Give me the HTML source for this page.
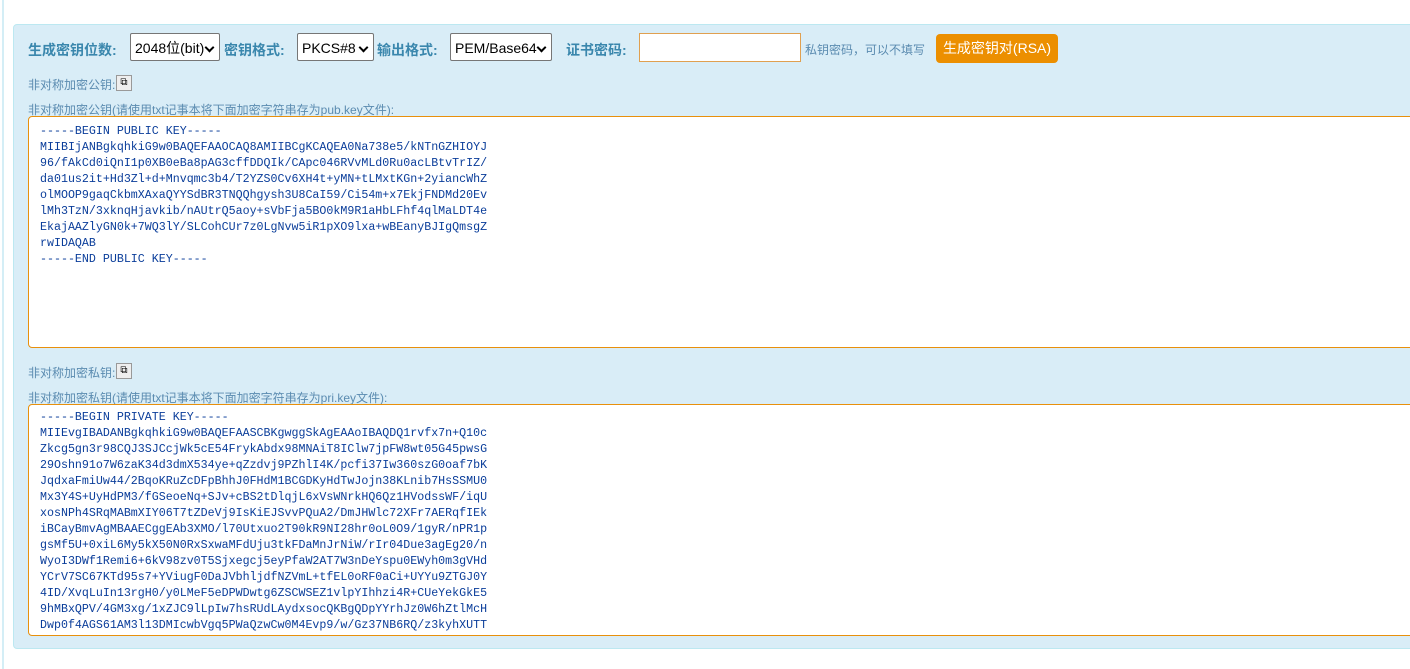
<!DOCTYPE html>
<html><head><meta charset="utf-8"><style>
body{margin:0;width:1410px;height:669px;background:#fff;overflow:hidden;position:relative;font-family:"Liberation Sans","Noto Sans CJK SC",sans-serif;}
.vl{position:absolute;left:2px;top:0;width:2px;height:669px;background:#d4eef6}
.panel{position:absolute;left:13px;top:24px;width:1410px;height:623px;background:#d9edf7;border:1px solid #bce8f1;border-radius:4px;}
.lbl{position:absolute;font-size:14px;font-weight:bold;color:#3a87ad;top:40px}
.sel{position:absolute;top:33px;height:28px;border:1px solid #767676;border-radius:2px;background:#fff;font-size:14px;line-height:28px;padding-left:4px;box-sizing:border-box;color:#000}
.sel:after{content:"";position:absolute;right:6px;top:10px;width:5px;height:5px;border-right:2px solid #000;border-bottom:2px solid #000;transform:rotate(45deg)}
.small{position:absolute;font-size:12px;color:#5a8bb0}
.copy{position:absolute;width:16px;height:16px;border:1px solid #999;background:#eee;box-sizing:border-box;font-size:10px;text-align:center;line-height:14px}
.ta{position:absolute;left:28px;width:1400px;background:#fff;border:1px solid #e8900c;border-radius:4px 0 0 4px;box-sizing:border-box;font-family:"Liberation Mono",monospace;font-size:11.65px;line-height:16px;color:#0a3d9a;padding:7px 0 0 11px;white-space:pre;overflow:hidden}
</style></head><body>
<div class="vl"></div>
<div class="panel"></div>
<div class="lbl" style="left:28px">生成密钥位数:</div>
<div class="sel" style="left:130px;width:90px">2048位(bit)</div>
<div class="lbl" style="left:224px">密钥格式:</div>
<div class="sel" style="left:297px;width:77px">PKCS#8</div>
<div class="lbl" style="left:377px">输出格式:</div>
<div class="sel" style="left:450px;width:102px">PEM/Base64</div>
<div class="lbl" style="left:566px">证书密码:</div>
<div style="position:absolute;left:639px;top:33px;width:162px;height:29px;border:1px solid #e0a050;background:#fff;box-sizing:border-box"></div>
<div class="small" style="left:805px;top:41px">私钥密码，可以不填写</div>
<div style="position:absolute;left:936px;top:34px;width:122px;height:29px;background:#ec8f00;border-radius:4px;color:#fff;font-size:14px;line-height:29px;text-align:center">生成密钥对(RSA)</div>
<div class="small" style="left:28px;top:76px">非对称加密公钥:</div>
<div class="copy" style="left:116px;top:75px">⧉</div>
<div class="small" style="left:28px;top:101px">非对称加密公钥(请使用txt记事本将下面加密字符串存为pub.key文件):</div>
<div class="ta" style="top:116px;height:232px">-----BEGIN PUBLIC KEY-----
MIIBIjANBgkqhkiG9w0BAQEFAAOCAQ8AMIIBCgKCAQEA0Na738e5/kNTnGZHIOYJ
96/fAkCd0iQnI1p0XB0eBa8pAG3cffDDQIk/CApc046RVvMLd0Ru0acLBtvTrIZ/
da01us2it+Hd3Zl+d+Mnvqmc3b4/T2YZS0Cv6XH4t+yMN+tLMxtKGn+2yiancWhZ
olMOOP9gaqCkbmXAxaQYYSdBR3TNQQhgysh3U8CaI59/Ci54m+x7EkjFNDMd20Ev
lMh3TzN/3xknqHjavkib/nAUtrQ5aoy+sVbFja5BO0kM9R1aHbLFhf4qlMaLDT4e
EkajAAZlyGN0k+7WQ3lY/SLCohCUr7z0LgNvw5iR1pXO9lxa+wBEanyBJIgQmsgZ
rwIDAQAB
-----END PUBLIC KEY-----</div>
<div class="small" style="left:28px;top:364px">非对称加密私钥:</div>
<div class="copy" style="left:116px;top:363px">⧉</div>
<div class="small" style="left:28px;top:389px">非对称加密私钥(请使用txt记事本将下面加密字符串存为pri.key文件):</div>
<div class="ta" style="top:404px;height:232px;padding-top:5px">-----BEGIN PRIVATE KEY-----
MIIEvgIBADANBgkqhkiG9w0BAQEFAASCBKgwggSkAgEAAoIBAQDQ1rvfx7n+Q10c
Zkcg5gn3r98CQJ3SJCcjWk5cE54FrykAbdx98MNAiT8IClw7jpFW8wt05G45pwsG
29Oshn91o7W6zaK34d3dmX534ye+qZzdvj9PZhlI4K/pcfi37Iw360szG0oaf7bK
JqdxaFmiUw44/2BqoKRuZcDFpBhhJ0FHdM1BCGDKyHdTwJojn38KLnib7HsSSMU0
Mx3Y4S+UyHdPM3/fGSeoeNq+SJv+cBS2tDlqjL6xVsWNrkHQ6Qz1HVodssWF/iqU
xosNPh4SRqMABmXIY06T7tZDeVj9IsKiEJSvvPQuA2/DmJHWlc72XFr7AERqfIEk
iBCayBmvAgMBAAECggEAb3XMO/l70Utxuo2T90kR9NI28hr0oL0O9/1gyR/nPR1p
gsMf5U+0xiL6My5kX50N0RxSxwaMFdUju3tkFDaMnJrNiW/rIr04Due3agEg20/n
WyoI3DWf1Remi6+6kV98zv0T5Sjxegcj5eyPfaW2AT7W3nDeYspu0EWyh0m3gVHd
YCrV7SC67KTd95s7+YViugF0DaJVbhljdfNZVmL+tfEL0oRF0aCi+UYYu9ZTGJ0Y
4ID/XvqLuIn13rgH0/y0LMeF5eDPWDwtg6ZSCWSEZ1vlpYIhhzi4R+CUeYekGkE5
9hMBxQPV/4GM3xg/1xZJC9lLpIw7hsRUdLAydxsocQKBgQDpYYrhJz0W6hZtlMcH
Dwp0f4AGS61AM3l13DMIcwbVgq5PWaQzwCw0M4Evp9/w/Gz37NB6RQ/z3kyhXUTT</div>
</body></html>
